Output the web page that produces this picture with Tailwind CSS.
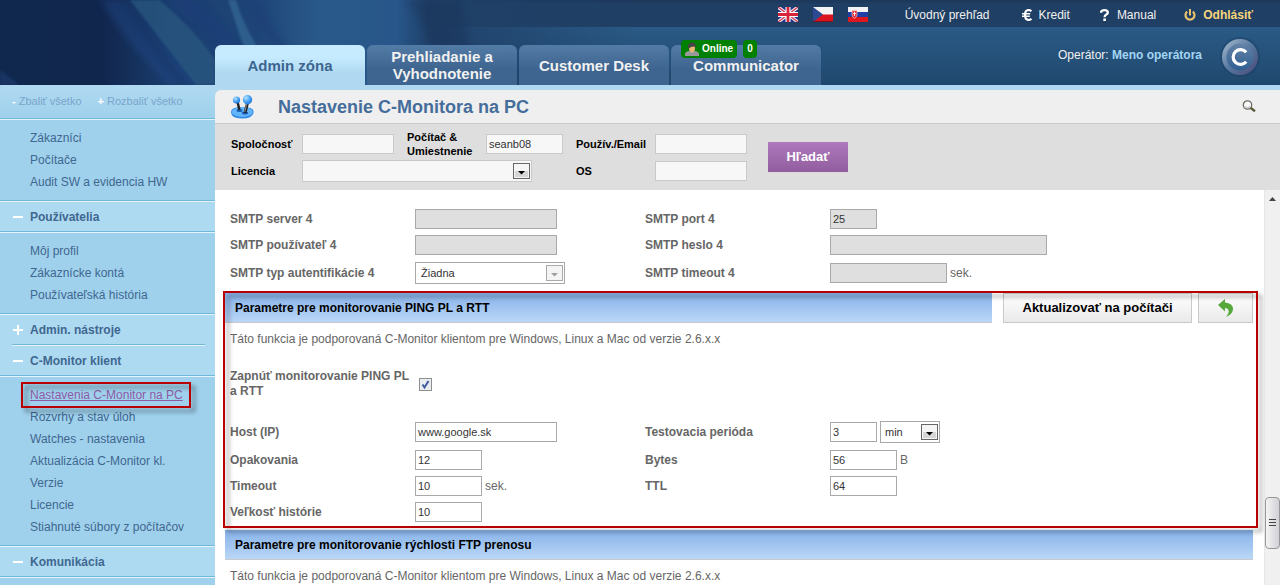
<!DOCTYPE html>
<html lang="sk">
<head>
  <meta charset="UTF-8">
  <meta name="viewport" content="width=device-width, initial-scale=1.0">
  <title>Nastavenie C-Monitora na PC</title>
  <script src="https://cdn.jsdelivr.net/npm/@tailwindcss/browser@4"></script>
</head>
<body class="flex flex-col h-screen overflow-hidden bg-white text-xs text-[#666] font-['Liberation_Sans',Arial,sans-serif]">

  <!-- Header -->
  <header class="relative shrink-0 h-[85px] bg-linear-to-b from-[#2a5a86] from-32% to-[#20486d]">
    <div class="absolute top-0 right-0 left-[430px] h-[27px] bg-linear-to-b from-[#1b3659] to-[#203f64] to-15%"></div>
    <svg class="absolute left-0 top-0" width="640" height="85" viewBox="0 0 640 85" aria-hidden="true">
      <defs>
        <linearGradient id="sky" x1="0" x2="1" y1="0" y2="0">
          <stop offset="0" stop-color="#10284e"/>
          <stop offset=".16" stop-color="#11264d"/>
          <stop offset=".27" stop-color="#1b3e70"/>
          <stop offset=".4" stop-color="#1f4577"/>
          <stop offset=".5" stop-color="#29598a"/>
          <stop offset=".62" stop-color="#28568a"/>
          <stop offset=".67" stop-color="#1f4068"/>
          <stop offset="1" stop-color="#1f4068" stop-opacity="0"/>
        </linearGradient>
        <filter id="soft" x="-20%" y="-20%" width="140%" height="140%"><feGaussianBlur stdDeviation="3"/></filter>
        <filter id="soft2" x="-20%" y="-20%" width="140%" height="140%"><feGaussianBlur stdDeviation="1"/></filter>
      </defs>
      <rect width="640" height="85" fill="url(#sky)"/>
      <path d="M100 0L135 0Q165 50 200 85L170 85Q130 50 100 0Z" fill="#20488a" opacity=".4" filter="url(#soft)"/>
      <path d="M0 70L20 85L0 85Z" fill="#1c3c70" opacity=".6" filter="url(#soft2)"/>
      <path d="M120 0Q145 40 180 85L188 85Q160 50 132 0Z" fill="#11284f" opacity=".3" filter="url(#soft)"/>
      <path d="M130 0L160 0Q195 30 215 60L215 85L196 85Q165 45 130 0Z" fill="#2c5a82" opacity=".7" filter="url(#soft2)"/>
      <path d="M165 0Q210 30 235 60L240 45L195 0Z" fill="#1c3d78" opacity=".8" filter="url(#soft)"/>
      <path d="M228 0Q236 25 244 48L258 48Q242 22 236 0Z" fill="#37709c" opacity=".6" filter="url(#soft2)"/>
      <path d="M246 0Q260 30 275 50L290 50Q268 25 262 0Z" fill="#1c4078" opacity=".7" filter="url(#soft)"/>
      <path d="M405 0Q425 20 432 50L470 50L460 0Z" fill="#122a50" opacity=".3" filter="url(#soft)"/>
    </svg>

    <div class="relative flex h-full flex-col">
      <!-- Top links -->
      <nav class="flex h-[29px] shrink-0 items-center justify-end pr-[27px] whitespace-nowrap text-[#f0f0f0]">
        <a href="#" aria-label="English" class="mr-[15px]">
          <svg width="20" height="15" viewBox="0 0 20 15"><rect width="20" height="15" fill="#25348a"/><path d="M0 0L20 15M20 0L0 15" stroke="#f3e9ee" stroke-width="3.4"/><path d="M0 0L20 15M20 0L0 15" stroke="#d23a4c" stroke-width="1.3"/><path d="M10 0V15M0 7.500H20" stroke="#fff" stroke-width="5"/><path d="M10 0V15M0 7.500H20" stroke="#d8233b" stroke-width="2.800"/></svg>
        </a>
        <a href="#" aria-label="Česky" class="mr-[15px]">
          <svg width="20" height="15" viewBox="0 0 20 15"><rect width="20" height="8" fill="#f4f4f4"/><rect y="7.500" width="20" height="7.500" fill="#d91420"/><path d="M0 0L10 7.500L0 15Z" fill="#2b4a91"/><path d="M0 14.500H20" stroke="#7c1118"/></svg>
        </a>
        <a href="#" aria-label="Slovensky" class="mr-[37px]">
          <svg width="20" height="15" viewBox="0 0 20 15"><rect width="20" height="5" fill="#f4f4f4"/><rect y="5" width="20" height="5" fill="#1f3fa6"/><rect y="10" width="20" height="5" fill="#e0161f"/><path d="M4 3.500H9V8Q8.500 10.500 6.500 11.500Q4.500 10.500 4 8Z" fill="#e3303a" stroke="#f6d9dc" stroke-width=".6"/><path d="M6.500 4.500V9M5 6.500H8" stroke="#fff" stroke-width=".8"/></svg>
        </a>
        <a href="#" class="mr-8">Úvodný prehľad</a>
        <a href="#" class="mr-[30px] flex items-center gap-[7px]">
          <svg width="10" height="12" viewBox="0 0 10 12" fill="none" stroke="#fff"><path d="M9.500 2.200Q8 1 6.500 1Q3 1.300 3 6Q3 10.700 6.500 11Q8 11 9.500 9.800" stroke-width="2.200"/><path d="M0 4.800H8.200M0 7.200H7.800" stroke-width="1.400"/></svg>
          Kredit
        </a>
        <a href="#" class="mr-[28px] flex items-center gap-2">
          <svg width="9" height="12" viewBox="0 0 9 12"><path d="M1 3.800Q1 1.200 4.500 1.200Q7.800 1.200 7.800 3.600Q7.800 5 6 5.800Q4.600 6.500 4.600 8.300" fill="none" stroke="#fff" stroke-width="2.300"/><rect x="3.300" y="9.500" width="2.600" height="2.500" fill="#fff"/></svg>
          Manual
        </a>
        <a href="#" class="flex items-center gap-[7px] font-bold text-[#f9d67a]">
          <svg width="12" height="12" viewBox="0 0 12 12" fill="none" stroke="#e9c46c"><path d="M3.200 2.600A4.500 4.500 0 1 0 8.800 2.600" stroke-width="2.200"/><path d="M6 0V6.500" stroke-width="2"/></svg>
          Odhlásiť
        </a>
      </nav>

      <div class="flex flex-1 justify-between pl-[215px]">
        <!-- Tabs -->
        <nav class="flex shrink-0 items-end gap-[2px] text-center text-[15px] leading-[17px] font-bold text-[#f1f1f1]">
          <a href="#" class="flex h-10 w-[150px] items-center justify-center rounded-t-md bg-linear-to-b from-[#c6ebff] from-30% to-[#b0d9f1] to-70% text-[#3c6590]">Admin zóna</a>
          <a href="#" class="flex h-10 w-[150px] items-center justify-center rounded-t-md bg-linear-to-b from-[#527ba6] to-[#3e658f] to-60%">Prehliadanie a<br>Vyhodnotenie</a>
          <a href="#" class="flex h-10 w-[150px] items-center justify-center rounded-t-md bg-linear-to-b from-[#527ba6] to-[#3e658f] to-60%">Customer Desk</a>
          <a href="#" class="relative flex h-10 w-[150px] items-center justify-center rounded-t-md bg-linear-to-b from-[#527ba6] to-[#3e658f] to-60%">
            Communicator
            <span class="absolute left-[10px] -top-[5px] flex gap-[6px] text-[10px] leading-[18px] text-white">
              <span class="flex h-[18px] items-center gap-[3px] rounded-sm bg-[#008000] px-1">
                <svg width="14" height="14" viewBox="0 0 14 14"><path d="M0 14V11.500Q1 9 4.500 9H9.500Q13 9 14 11.500V14Z" fill="#999"/><path d="M5 8H9L7 11Z" fill="#f0dfc0"/><ellipse cx="7" cy="6.500" rx="3" ry="3.500" fill="#e8b775"/><path d="M3 6.500V4Q3.500 .5 7 .5Q10.500 .5 11 4V5.500L9.500 4.500Q6 4 4 6.500Z" fill="#444"/></svg>
                Online
              </span>
              <span class="h-[18px] rounded-sm bg-[#008000] px-1">0</span>
            </span>
          </a>
        </nav>

        <!-- Operator -->
        <div class="flex items-center gap-4 pr-[18px]">
          <p class="pb-1 whitespace-nowrap text-[#f0f0f0]">Operátor: <a href="#" class="font-bold text-[#a3d6f3]">Meno operátora</a></p>
          <svg width="44" height="44" viewBox="0 0 44 44">
            <defs>
              <linearGradient id="ring" x1="0" y1="0" x2="1" y2="1"><stop offset="0" stop-color="#a9bdd0"/><stop offset=".5" stop-color="#56779f"/><stop offset="1" stop-color="#4b4877"/></linearGradient>
              <linearGradient id="disc" x1="0" y1="0" x2="0" y2="1"><stop offset="0" stop-color="#6482a6"/><stop offset="1" stop-color="#2f5f92"/></linearGradient>
            </defs>
            <circle cx="22" cy="22" r="20" fill="#1c4068" opacity=".5"/>
            <circle cx="22" cy="22" r="18" fill="url(#ring)"/>
            <circle cx="22" cy="22" r="13.500" fill="url(#disc)"/>
            <path d="M28.200 17.200A7.400 7.400 0 1 0 28.200 26.800" fill="none" stroke="#fff" stroke-width="3.200"/>
          </svg>
        </div>
      </div>
    </div>
  </header>

  <div class="flex min-h-0 flex-1">

    <!-- Sidebar -->
    <aside class="w-[215px] shrink-0 overflow-hidden bg-[#9fd1ec] text-[#3f6790]">
      <div class="flex h-[33px] items-center gap-4 bg-linear-to-b from-[#b0d9f1] to-[#9fd1ec] pl-3 text-[11px] text-[#7aa5cc]">
        <a href="#"><b class="text-white">-</b> Zbaliť všetko</a>
        <a href="#"><b class="text-white">+</b> Rozbaliť všetko</a>
      </div>
      <div class="h-[2px] border-t border-b border-t-[#6fb8dc] border-b-[#e2f4fd]"></div>
      <ul class="py-[7px] pl-[30px] leading-[22px]">
        <li><a href="#">Zákazníci</a></li>
        <li><a href="#">Počítače</a></li>
        <li><a href="#">Audit SW a evidencia HW</a></li>
      </ul>

      <div class="h-[2px] border-t border-b border-t-[#6fb8dc] border-b-[#e2f4fd]"></div>
      <a href="#" class="flex h-[29px] items-center gap-[7px] bg-[#aedaf1] pl-[13px] font-bold">
        <svg width="10" height="10" viewBox="0 0 10 10"><path d="M0 5H10" stroke="#fff" stroke-width="2"/></svg>Používatelia
      </a>
      <div class="h-[2px] border-t border-b border-t-[#6fb8dc] border-b-[#e2f4fd]"></div>
      <ul class="py-[7px] pl-[30px] leading-[22px]">
        <li><a href="#">Môj profil</a></li>
        <li><a href="#">Zákaznícke kontá</a></li>
        <li><a href="#">Používateľská história</a></li>
      </ul>

      <div class="h-[2px] border-t border-b border-t-[#6fb8dc] border-b-[#e2f4fd]"></div>
      <div class="bg-[#aedaf1]">
        <a href="#" class="flex h-[29px] items-center gap-[7px] pl-[13px] font-bold">
          <svg width="10" height="10" viewBox="0 0 10 10"><path d="M0 5H10M5 0V10" stroke="#fff" stroke-width="2"/></svg>Admin. nástroje
        </a>
        <div class="mr-[10px] ml-3 h-[2px] border-t border-b border-t-[#6fb8dc] border-b-[#e2f4fd]"></div>
        <a href="#" class="flex h-[29px] items-center gap-[7px] pl-[13px] font-bold">
          <svg width="10" height="10" viewBox="0 0 10 10"><path d="M0 5H10" stroke="#fff" stroke-width="2"/></svg>C-Monitor klient
        </a>
      </div>
      <div class="h-[2px] border-t border-b border-t-[#6fb8dc] border-b-[#e2f4fd]"></div>
      <ul class="py-[7px] pl-[30px] leading-[22px]">
        <li>
          <a href="#" class="relative inline-block text-[#8e5ba6] underline">Nastavenia C-Monitor na PC
            <span class="absolute -top-[2px] -right-2 -bottom-[2px] -left-[9px] border-2 border-[#b90000] drop-shadow-[4px_4px_2px_rgba(0,0,0,0.45)]"></span>
          </a>
        </li>
        <li><a href="#">Rozvrhy a stav úloh</a></li>
        <li><a href="#">Watches - nastavenia</a></li>
        <li><a href="#">Aktualizácia C-Monitor kl.</a></li>
        <li><a href="#">Verzie</a></li>
        <li><a href="#">Licencie</a></li>
        <li><a href="#">Stiahnuté súbory z počítačov</a></li>
      </ul>

      <div class="h-[2px] border-t border-b border-t-[#6fb8dc] border-b-[#e2f4fd]"></div>
      <a href="#" class="flex h-[29px] items-center gap-[7px] bg-[#aedaf1] pl-[13px] font-bold">
        <svg width="10" height="10" viewBox="0 0 10 10"><path d="M0 5H10" stroke="#fff" stroke-width="2"/></svg>Komunikácia
      </a>
      <div class="h-[2px] border-t border-b border-t-[#6fb8dc] border-b-[#e2f4fd]"></div>
    </aside>

    <!-- Main content -->
    <main class="flex min-w-0 flex-1 flex-col">
      <div class="shrink-0 bg-[#b0d9f1] pt-[5px]">
        <div class="flex h-[34px] items-center rounded-tl-md border-b border-[#c9c9c9] bg-[#efefef] pr-6 pl-4">
          <svg width="23" height="24" viewBox="0 0 23 24">
            <defs>
              <radialGradient id="ball" cx=".35" cy=".3" r=".8"><stop offset="0" stop-color="#b5e2ff"/><stop offset=".5" stop-color="#4ba6f5"/><stop offset="1" stop-color="#1668d0"/></radialGradient>
            </defs>
            <path d="M0 17Q0 12 11 12Q22 12 22.500 16V18Q21 23.500 11 23.500Q0 23.500 0 17Z" fill="#2f86e6"/>
            <ellipse cx="11.300" cy="17" rx="10.500" ry="5" fill="#62b5fa"/>
            <ellipse cx="8.500" cy="15.500" rx="3" ry="1.500" fill="#1b62bd"/>
            <ellipse cx="14" cy="18" rx="3.200" ry="1.500" fill="#1b62bd"/>
            <path d="M6.500 7L8.500 15" stroke="#222" stroke-width="2.400"/>
            <path d="M16.500 8L14 18" stroke="#222" stroke-width="3"/>
            <path d="M15.600 9L13.800 17" stroke="#aaa" stroke-width=".8"/>
            <circle cx="5.500" cy="5" r="3.600" fill="url(#ball)"/>
            <circle cx="16.500" cy="4.800" r="4.700" fill="url(#ball)"/>
          </svg>
          <h1 class="ml-6 flex-1 text-lg font-bold text-[#456d9b]">Nastavenie C-Monitora na PC</h1>
          <button type="button" aria-label="Vyhľadať">
            <svg width="14" height="13" viewBox="0 0 14 13"><circle cx="5.500" cy="5" r="4.200" fill="#f8f8f8" stroke="#6d6d64" stroke-width="1.300"/><path d="M3 6.500Q5.500 9 8 6.500" fill="none" stroke="#b5b8c0"/><path d="M8.500 7.800L13 11.300" stroke="#5c5c3c" stroke-width="2.400"/></svg>
          </button>
        </div>
      </div>

      <!-- Filter -->
      <form class="flex h-[66px] shrink-0 items-center gap-[21px] bg-[#dedede] pl-4">
        <div class="grid grid-cols-[71px_105px_79px_90px_79px_92px] grid-rows-[28px_26px] items-center text-[11px] leading-[14px] font-bold text-black">
          <label for="company">Spoločnosť</label>
          <input id="company" type="text" class="h-5 w-[92px] border border-[#c9c9c9] bg-[#f7f7f7] px-[2px] font-normal">
          <label for="computer">Počítač &amp;<br>Umiestnenie</label>
          <input id="computer" type="text" value="seanb08" class="h-5 w-[77px] border border-[#c9c9c9] bg-[#f7f7f7] px-[2px] font-normal text-[#333]">
          <label for="email">Použív./Email</label>
          <input id="email" type="text" class="h-5 w-[92px] border border-[#c9c9c9] bg-[#f7f7f7] px-[2px] font-normal">
          <label for="license">Licencia</label>
          <div class="relative col-span-3 w-[230px]">
            <select id="license" class="block h-[22px] w-full appearance-none border border-[#c9c9c9] bg-[#f7f7f7] px-[5px] font-normal"><option></option></select>
            <svg class="pointer-events-none absolute top-[3px] right-[2px]" width="17" height="16" viewBox="0 0 17 16"><rect x=".5" y=".5" width="16" height="15" fill="#f5f5f5" stroke="#666"/><path d="M2 8H15V14H2Z" fill="#d6d6d6"/><path d="M5 8H12L8.500 11.500Z" fill="#000"/></svg>
          </div>
          <label for="os">OS</label>
          <input id="os" type="text" class="h-5 w-[92px] border border-[#c9c9c9] bg-[#f7f7f7] px-[2px] font-normal">
        </div>
        <button type="submit" class="h-[30px] w-20 bg-linear-to-b from-[#ae7abd] to-[#925d9e] text-[13px] font-bold text-white">Hľadať</button>
      </form>

      <div class="flex min-h-0 flex-1">
        <form class="min-w-0 flex-1 overflow-hidden pt-4 pr-[11px] pl-[10px]">

          <!-- SMTP -->
          <div class="grid grid-cols-[185px_230px_185px_1fr] grid-rows-[26px_26px_30px] items-center pl-[5px]">
            <label for="server" class="font-bold">SMTP server 4</label>
            <input id="server" type="text" disabled class="h-5 w-[142px] border border-[#a9a9a9] bg-[#dfdfdf] px-[2px] text-[11px] text-[#333]">
            <label for="port" class="font-bold">SMTP port 4</label>
            <input id="port" type="text" value="25" disabled class="h-5 w-[47px] border border-[#a9a9a9] bg-[#dfdfdf] px-[2px] text-[11px] text-[#333]">
            <label for="user" class="font-bold">SMTP používateľ 4</label>
            <input id="user" type="text" disabled class="h-5 w-[142px] border border-[#a9a9a9] bg-[#dfdfdf] px-[2px] text-[11px] text-[#333]">
            <label for="password" class="font-bold">SMTP heslo 4</label>
            <input id="password" type="password" disabled class="h-5 w-[217px] border border-[#a9a9a9] bg-[#dfdfdf] px-[2px] text-[11px] text-[#333]">
            <label for="auth" class="font-bold">SMTP typ autentifikácie 4</label>
            <div class="relative w-[150px]">
              <select id="auth" class="block h-[22px] w-full appearance-none border border-[#a9a9a9] bg-white px-[5px] text-[11px] text-[#333]"><option>Žiadna</option></select>
              <svg class="pointer-events-none absolute top-[3px] right-[2px]" width="17" height="16" viewBox="0 0 17 16"><rect x=".5" y=".5" width="16" height="15" fill="#f4f4f4" stroke="#aaa"/><path d="M5 8H12L8.500 11.500Z" fill="#a0a0a0"/></svg>
            </div>
            <label for="smtptimeout" class="font-bold">SMTP timeout 4</label>
            <div class="flex items-center gap-[3px]">
              <input id="smtptimeout" type="text" disabled class="h-5 w-[117px] border border-[#a9a9a9] bg-[#dfdfdf] px-[2px] text-[11px] text-[#333]">
              <span>sek.</span>
            </div>
          </div>

          <!-- PING -->
          <section class="relative mt-[5px]">
            <div class="flex h-[30px]">
              <h2 class="flex-1 border-b border-[#c9c9d0] bg-linear-to-b from-[#85b1e8] to-[#bbd7f7] pl-[10px] leading-[30px] font-bold text-black">Parametre pre monitorovanie PING PL a RTT</h2>
              <button type="button" class="ml-[11px] w-[189px] border border-[#c9c9c9] bg-linear-to-b from-white to-[#e9e9e9] text-[13px] font-bold text-black">Aktualizovať na počítači</button>
              <button type="button" aria-label="Späť" class="ml-[6px] flex w-[55px] items-center justify-center border border-[#c9c9c9] bg-linear-to-b from-white to-[#e9e9e9]">
                <svg width="16" height="18" viewBox="0 0 16 18"><path d="M0 6L7 0V3.500Q15 4 15 10.500Q14.500 15 8 18Q11.500 13.500 10.500 11Q9.500 9 7 9V12.500Z" fill="#55a839"/></svg>
              </button>
            </div>
            <p class="mt-2 pl-[5px]">Táto funkcia je podporovaná C-Monitor klientom pre Windows, Linux a Mac od verzie 2.6.x.x</p>
            <div class="mt-[22px] grid grid-cols-[185px_1fr] items-center pl-[5px]">
              <label for="ping" class="leading-[15px] font-bold">Zapnúť monitorovanie PING PL<br>a RTT</label>
              <div class="relative ml-1 size-[13px]">
                <input id="ping" type="checkbox" checked class="peer block size-[13px] appearance-none border border-[#8e8f8f] bg-[#e9edf2]">
                <svg class="pointer-events-none absolute top-0 left-0 hidden peer-checked:block" width="13" height="13" viewBox="0 0 13 13"><path d="M3.500 6.500L5.500 9.500L9.500 3" fill="none" stroke="#3f5a9d" stroke-width="2"/></svg>
              </div>
            </div>
            <div class="mt-[18px] grid grid-cols-[185px_230px_185px_1fr] grid-rows-[30px_26px_26px_26px] items-center pl-[5px]">
              <label for="host" class="font-bold">Host (IP)</label>
              <input id="host" type="text" value="www.google.sk" class="h-5 w-[142px] border border-[#a9a9a9] bg-white px-[2px] text-[11px] text-[#333]">
              <label for="period" class="font-bold">Testovacia perióda</label>
              <div class="flex items-center gap-[3px]">
                <input id="period" type="text" value="3" class="h-5 w-[47px] border border-[#a9a9a9] bg-white px-[2px] text-[11px] text-[#333]">
                <div class="relative w-[60px]">
                  <select aria-label="Jednotka" class="block h-[22px] w-full appearance-none border border-[#a9a9a9] bg-white px-1 text-[11px] text-[#333]"><option>min</option></select>
                  <svg class="pointer-events-none absolute top-[3px] right-[2px]" width="17" height="16" viewBox="0 0 17 16"><rect x=".5" y=".5" width="16" height="15" fill="#f5f5f5" stroke="#666"/><path d="M2 8H15V14H2Z" fill="#d6d6d6"/><path d="M5 8H12L8.500 11.500Z" fill="#000"/></svg>
                </div>
              </div>
              <label for="repeat" class="font-bold">Opakovania</label>
              <input id="repeat" type="text" value="12" class="h-5 w-[67px] border border-[#a9a9a9] bg-white px-[2px] text-[11px] text-[#333]">
              <label for="bytes" class="font-bold">Bytes</label>
              <div class="flex items-center gap-[3px]">
                <input id="bytes" type="text" value="56" class="h-5 w-[67px] border border-[#a9a9a9] bg-white px-[2px] text-[11px] text-[#333]">
                <span>B</span>
              </div>
              <label for="timeout" class="font-bold">Timeout</label>
              <div class="flex items-center gap-[3px]">
                <input id="timeout" type="text" value="10" class="h-5 w-[67px] border border-[#a9a9a9] bg-white px-[2px] text-[11px] text-[#333]">
                <span>sek.</span>
              </div>
              <label for="ttl" class="font-bold">TTL</label>
              <input id="ttl" type="text" value="64" class="h-5 w-[67px] border border-[#a9a9a9] bg-white px-[2px] text-[11px] text-[#333]">
              <label for="history" class="font-bold">Veľkosť histórie</label>
              <input id="history" type="text" value="10" class="h-5 w-[67px] border border-[#a9a9a9] bg-white px-[2px] text-[11px] text-[#333]">
            </div>
            <div class="pointer-events-none absolute -top-[2px] -right-[5px] -bottom-[3px] -left-[2px] z-10 border-2 border-[#b90000] drop-shadow-[4px_4px_2px_rgba(0,0,0,0.4)]"></div>
          </section>

          <!-- FTP -->
          <section class="mt-[5px]">
            <h2 class="h-[30px] border-b border-[#c9c9d0] bg-linear-to-b from-[#85b1e8] to-[#bbd7f7] pl-[10px] leading-[30px] font-bold text-black">Parametre pre monitorovanie rýchlosti FTP prenosu</h2>
            <p class="mt-2 pl-[5px]">Táto funkcia je podporovaná C-Monitor klientom pre Windows, Linux a Mac od verzie 2.6.x.x</p>
          </section>
        </form>

        <!-- Scrollbar -->
        <div class="flex w-4 shrink-0 flex-col items-center border-l border-[#e6e6e6] bg-[#f0f0f0] pt-[7px] pb-9" aria-hidden="true">
          <svg width="7" height="4" viewBox="0 0 7 4"><path d="M0 4L3.500 0L7 4Z" fill="#444"/></svg>
          <div class="mt-auto flex h-[52px] w-[15px] items-center justify-center rounded-sm border border-[#979797] bg-linear-to-r from-[#f5f5f5] to-[#d0d0d6]">
            <svg width="7" height="8" viewBox="0 0 7 8"><path d="M0 .5H7M0 3.500H7M0 6.500H7" stroke="#444"/></svg>
          </div>
        </div>
      </div>
    </main>
  </div>

</body>
</html>
